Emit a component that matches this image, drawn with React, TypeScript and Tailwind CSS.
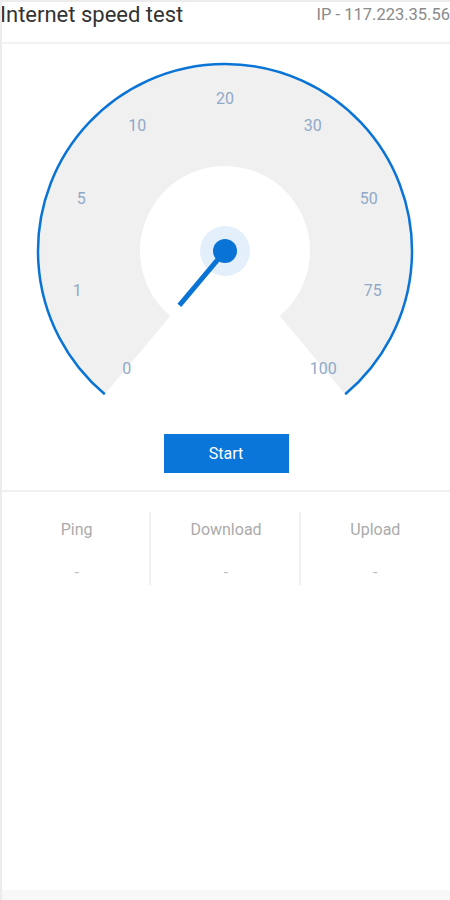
import React from "react";

const CX = 223;
const CY = 207;
const RO = 187;
const RI = 85;
const BLUE = "#0a74d6";

function pt(r: number, deg: number) {
  const a = (deg * Math.PI) / 180;
  return [CX + r * Math.cos(a), CY + r * Math.sin(a)];
}

const labels: [string, number][] = [
  ["0", 130],
  ["1", 165],
  ["5", 200],
  ["10", 235],
  ["20", 270],
  ["30", 305],
  ["50", 340],
  ["75", 15],
  ["100", 50],
];

function Gauge() {
  const [ox1, oy1] = pt(RO, 130);
  const [ox2, oy2] = pt(RO, 50);
  const [ix1, iy1] = pt(RI, 130);
  const [ix2, iy2] = pt(RI, 50);
  const band = `M ${ox1} ${oy1} A ${RO} ${RO} 0 1 1 ${ox2} ${oy2} L ${ix2} ${iy2} A ${RI} ${RI} 0 1 0 ${ix1} ${iy1} Z`;
  const arc = `M ${ox1} ${oy1} A ${RO} ${RO} 0 1 1 ${ox2} ${oy2}`;
  const [nx, ny] = pt(71, 130);
  return (
    <svg width="448" height="380" viewBox="0 0 448 380" className="block">
      <path d={band} fill="#f0f0f0" />
      <path d={arc} fill="none" stroke={BLUE} strokeWidth="2.5" />
      {labels.map(([t, d]) => {
        const [x, y] = pt(153, d);
        return (
          <text
            key={t}
            x={x}
            y={y}
            textAnchor="middle"
            dominantBaseline="central"
            fontSize="16"
            fill="#8fa9c8"
            fontFamily="Roboto, 'Liberation Sans', sans-serif"
          >
            {t}
          </text>
        );
      })}
      <circle cx={CX} cy={CY} r="25" fill="#e3effb" />
      <line x1={CX} y1={CY} x2={nx} y2={ny} stroke={BLUE} strokeWidth="5" />
      <circle cx={CX} cy={CY} r="12" fill={BLUE} />
    </svg>
  );
}

function Stat({ label, border }: { label: string; border?: boolean }) {
  return (
    <div className="flex-1 flex flex-col items-center relative">
      <div className="text-[16px] leading-[20px] text-[#ababab] mt-[28px]">{label}</div>
      <div className="text-[16px] leading-[20px] text-[#c0c0c0] mt-[23px]">-</div>
      {border && <div className="absolute right-0 top-[20px] w-[2px] h-[73px] bg-[#f0f0f0]" />}
    </div>
  );
}

export default function App() {
  return (
    <div
      className="w-[450px] h-[900px] bg-white border-l-2 border-t-2 border-[#ececec] flex flex-col relative overflow-hidden"
      style={{ fontFamily: "Roboto, 'Liberation Sans', sans-serif" }}
    >
      <div className="h-[40px] flex justify-between items-start">
        <div className="text-[22px] leading-[26px] text-[#333333] -ml-[2px]">Internet speed test</div>
        <div className="text-[16.5px] leading-[26px] text-[#8a8a8a]">IP - 117.223.35.56</div>
      </div>
      <div className="h-[2px] bg-[#f2f2f2]" />
      <Gauge />
      <div className="flex justify-center mt-[10px]">
        <div className="w-[125px] h-[39px] bg-[#0b76da] text-white text-[16px] flex items-center justify-center">
          Start
        </div>
      </div>
      <div className="h-[2px] bg-[#f0f0f0] mt-[17px]" />
      <div className="flex">
        <Stat label="Ping" border />
        <Stat label="Download" border />
        <Stat label="Upload" />
      </div>
      <div className="absolute left-0 right-0 bottom-0 h-[10px] bg-[#f8f8f8]" />
    </div>
  );
}
